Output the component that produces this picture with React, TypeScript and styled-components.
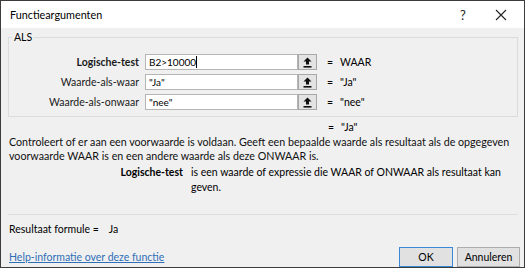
import React from "react";
import styled, { createGlobalStyle } from "styled-components";

const Global = createGlobalStyle`
  html, body { margin: 0; padding: 0; background: #ffffff; }
  body { font-family: Lato, "Noto Sans", sans-serif; font-size: 10.5px; color: #000; }
  * { box-sizing: border-box; }
`;

const Dialog = styled.div`
  width: 525px;
  height: 268px;
  border: 1px solid #3c3c3c;
  background: #f0f0f0;
  display: flex;
  flex-direction: column;
`;

const TitleBar = styled.div`
  height: 27px;
  background: #ffffff;
  display: flex;
  align-items: center;
  padding-left: 9px;
  font-size: 10.8px;
`;

const Title = styled.div`
  flex: 1;
`;

const TitleButton = styled.div<{ $w: number }>`
  width: ${(p) => p.$w}px;
  height: 27px;
  display: flex;
  align-items: center;
  justify-content: center;
  font-size: 13px;
  color: #222;
`;

const Body = styled.div`
  flex: 1;
  display: flex;
  flex-direction: column;
  padding: 0 4px 0 7px;
`;

const Group = styled.fieldset`
  margin: 3px 2px 0 0;
  padding: 10px 0 4px 0;
  border: 1px solid #dcdcdc;
  border-radius: 0;
  height: 86px;
  display: grid;
  grid-template-columns: 136px 153px 19px auto;
  row-gap: 4px;
  align-items: center;
  align-content: start;
`;

const Legend = styled.legend`
  padding: 0 2px;
  margin-left: 3px;
  line-height: 13px;
`;

const Label = styled.div<{ $bold?: boolean }>`
  text-align: right;
  padding-right: 6px;
  font-weight: ${(p) => (p.$bold ? 700 : 400)};
  color: #1a1a1a;
`;

const Input = styled.div`
  height: 16px;
  background: #fff;
  border: 1px solid #b5b5b5;
  padding-left: 3px;
  font-size: 10px;
  display: flex;
  align-items: center;
`;

const Caret = styled.span`
  display: inline-block;
  width: 1px;
  height: 12px;
  background: #000;
`;

const PickButton = styled.div`
  width: 19px;
  height: 16px;
  background: #e4e4e4;
  border: 1px solid #a8a8a8;
  display: flex;
  align-items: center;
  justify-content: center;
`;

const Result = styled.div`
  display: flex;
  align-items: center;
  padding-left: 10px;
  gap: 6px;
`;

const Eq = styled.span`
  width: 7px;
`;

const TotalRow = styled.div`
  height: 17px;
  margin-top: 1px;
  display: flex;
  align-items: center;
  padding-left: 320px;
  gap: 6px;
`;

const Description = styled.div`
  line-height: 14px;
  padding-left: 1px;
  color: #111;
  font-size: 10.7px;
`;

const ArgHelp = styled.div`
  display: grid;
  grid-template-columns: 183px 1fr;
  margin-top: 2px;
  line-height: 15px;
  height: 40px;
`;

const ArgName = styled.div`
  font-weight: 700;
  text-align: right;
  padding-right: 8px;
`;

const ArgText = styled.div`
  padding-right: 2px;
`;

const Separator = styled.div`
  height: 1px;
  background: #dedede;
  margin: 9px 2px 0 0;
`;

const FormulaResult = styled.div`
  margin-top: 6px;
  height: 16px;
  display: flex;
  align-items: center;
  padding-left: 1px;
  gap: 10px;
`;

const Footer = styled.div`
  display: flex;
  align-items: center;
  margin-top: 10px;
  padding-left: 1px;
`;

const HelpLink = styled.a`
  flex: 1;
  color: #2f6fb8;
  text-decoration: underline;
`;

const Button = styled.button<{ $primary?: boolean }>`
  height: 20px;
  width: ${(p) => (p.$primary ? "54px" : "63px")};
  margin-left: 4px;
  font-family: inherit;
  font-size: 10.5px;
  background: #e1e1e1;
  border: 1px solid ${(p) => (p.$primary ? "#3a87d5" : "#adadad")};
  padding: 0;
  color: #000;
`;

const UpArrow = () => (
  <svg width="9" height="11" viewBox="0 0 9 11">
    <path d="M4.5 0.5 L8.5 4.5 L6 4.5 L6 7.5 L3 7.5 L3 4.5 L0.5 4.5 Z" fill="#111" />
    <rect x="0.5" y="9" width="8" height="1.6" fill="#111" />
  </svg>
);

const CloseIcon = () => (
  <svg width="12" height="12" viewBox="0 0 12 12">
    <path d="M1 1 L11 11 M11 1 L1 11" stroke="#222" strokeWidth="1.1" />
  </svg>
);

const rows = [
  { label: "Logische-test", value: "B2>10000", result: "WAAR", bold: true, caret: true },
  { label: "Waarde-als-waar", value: "\"Ja\"", result: "\"Ja\"" },
  { label: "Waarde-als-onwaar", value: "\"nee\"", result: "\"nee\"" },
];

export default function App() {
  return (
    <>
      <Global />
      <Dialog>
        <TitleBar>
          <Title>Functieargumenten</Title>
          <TitleButton $w={30}>?</TitleButton>
          <TitleButton $w={46}>
            <CloseIcon />
          </TitleButton>
        </TitleBar>
        <Body>
          <Group>
            <Legend>ALS</Legend>
            {rows.map((r) => (
              <React.Fragment key={r.label}>
                <Label $bold={r.bold}>{r.label}</Label>
                <Input>
                  {r.value}
                  {r.caret && <Caret />}
                </Input>
                <PickButton>
                  <UpArrow />
                </PickButton>
                <Result>
                  <Eq>=</Eq>
                  <span>{r.result}</span>
                </Result>
              </React.Fragment>
            ))}
          </Group>
          <TotalRow>
            <Eq>=</Eq>
            <span>"Ja"</span>
          </TotalRow>
          <Description>
            Controleert of er aan een voorwaarde is voldaan. Geeft een bepaalde waarde als resultaat als de opgegeven
            voorwaarde WAAR is en een andere waarde als deze ONWAAR is.
          </Description>
          <ArgHelp>
            <ArgName>Logische-test</ArgName>
            <ArgText>is een waarde of expressie die WAAR of ONWAAR als resultaat kan geven.</ArgText>
          </ArgHelp>
          <Separator />
          <FormulaResult>
            <span>Resultaat formule =</span>
            <span>Ja</span>
          </FormulaResult>
          <Footer>
            <HelpLink>Help-informatie over deze functie</HelpLink>
            <Button $primary>OK</Button>
            <Button>Annuleren</Button>
          </Footer>
        </Body>
      </Dialog>
    </>
  );
}
